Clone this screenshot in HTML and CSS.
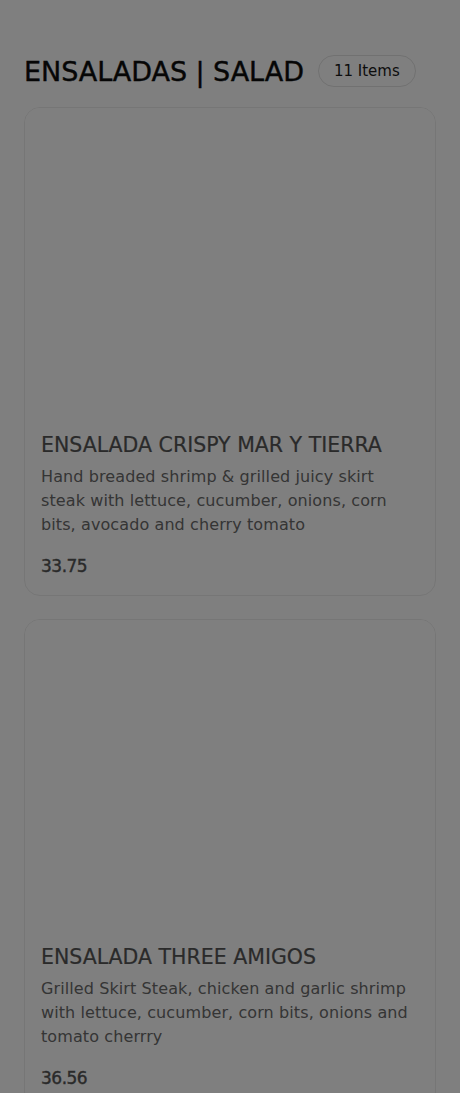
FILE: index.html
```html
<!DOCTYPE html>
<html lang="en">
<head>
<meta charset="utf-8">
<title>Menu</title>
<link rel="stylesheet" href="styles.css">
</head>
<body>
<main class="page">
  <header class="section-head">
    <h2 class="section-title">ENSALADAS | SALAD</h2>
    <span class="count">11 Items</span>
  </header>
  <div class="list">
    <article class="card">
      <div class="thumb"></div>
      <div class="info">
        <h3 class="name">ENSALADA CRISPY MAR Y TIERRA</h3>
        <p class="desc">Hand breaded shrimp &amp; grilled juicy skirt steak with lettuce, cucumber, onions, corn bits, avocado and cherry tomato</p>
        <div class="price">33.75</div>
      </div>
    </article>
    <article class="card">
      <div class="thumb"></div>
      <div class="info">
        <h3 class="name">ENSALADA THREE AMIGOS</h3>
        <p class="desc">Grilled Skirt Steak, chicken and garlic shrimp with lettuce, cucumber, corn bits, onions and tomato cherrry</p>
        <div class="price">36.56</div>
      </div>
    </article>
  </div>
</main>
<div class="backdrop"></div>
</body>
</html>
```

FILE: styles.css
```css
html, body {
  margin: 0;
  padding: 0;
  background: #fff;
}
body {
  font-family: "DejaVu Sans", "Open Sans", sans-serif;
  color: #333;
}
.page {
  padding: 53px 24px 0;
}
.section-head {
  display: flex;
  align-items: center;
  gap: 14px;
  height: 36px;
}
.section-title {
  margin: 0;
  font-size: 27px;
  font-weight: 400;
  color: #0c0c0c;
  letter-spacing: -0.05px;
  white-space: nowrap;
  -webkit-text-stroke: 0.4px #0c0c0c;
}
.count {
  display: inline-flex;
  align-items: center;
  height: 30px;
  padding: 0 15px;
  border: 1px solid #e2e2e2;
  border-radius: 16px;
  font-size: 15px;
  color: #1a1a1a;
}
.list {
  display: flex;
  flex-direction: column;
  gap: 23px;
  margin-top: 18px;
}
.card {
  border: 1px solid #ececec;
  border-radius: 16px;
  overflow: hidden;
  background: #fff;
}
.thumb {
  height: 313px;
  background: #fff;
}
.info {
  padding: 10px 16px 17px;
}
.name {
  margin: 0;
  font-size: 20.5px;
  font-weight: 400;
  color: #555;
  letter-spacing: 0;
  line-height: 28px;
  -webkit-text-stroke: 0.2px #555;
}
.desc {
  margin: 6px 0 0;
  font-size: 16px;
  line-height: 24px;
  color: #6a6a6a;
  letter-spacing: 0.1px;
}
.price {
  margin-top: 17px;
  font-size: 17px;
  font-weight: 400;
  color: #555;
  line-height: 24px;
  letter-spacing: -0.5px;
  -webkit-text-stroke: 0.4px #555;
}
.backdrop {
  position: fixed;
  inset: 0;
  background: rgba(0, 0, 0, 0.5);
}
```
